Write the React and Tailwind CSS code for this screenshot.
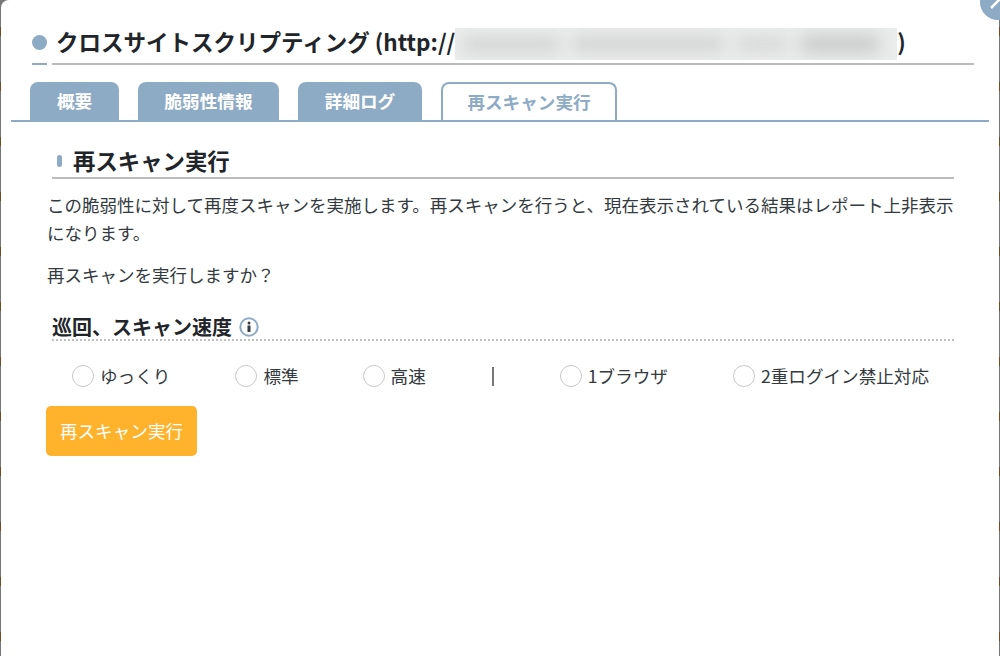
import React from 'react';

const tabs = [
    { label: '概要', width: 'w-[89px]' },
    { label: '脆弱性情報', width: 'w-[141px]' },
    { label: '詳細ログ', width: 'w-[124px]' },
];

const scanOptions = [
    { label: 'ゆっくり', margin: 'ml-[71px]' },
    { label: '標準', margin: 'ml-[65px]' },
    { label: '高速', margin: 'ml-[64px]' },
];

const browserOptions = [
    { label: '1ブラウザ', margin: 'ml-[66px]' },
    { label: '2重ログイン禁止対応', margin: 'ml-[65px]' },
];

const Radio = ({ label, margin }) => (
    <label className={`flex items-center gap-[6px] ${margin}`}>
        <span className="w-[22px] h-[22px] rounded-full border border-[#c8c8c8] bg-white shrink-0"></span>
        <span className="text-[17.6px] leading-[24px] text-[#333a40] whitespace-nowrap">{label}</span>
    </label>
);

const App = () => {
    return (
        <div className="relative w-[1000px] h-[656px] overflow-hidden flex px-px bg-[repeating-linear-gradient(180deg,#777777_0px,#777777_27px,#6e4d24_27px,#6e4d24_36px,#777777_36px,#777777_55px)] font-['Noto_Sans_CJK_JP',sans-serif] text-[#212529]">
            <div className="flex-1 flex flex-col bg-white rounded-tl-[8px]">
                {/* title */}
                <div className="flex items-end h-[65px] pl-[31px] pr-[25px]">
                    <div className="w-[15px] h-[36px] flex flex-col justify-between items-center mr-[5px]">
                        <span className="w-[15px] h-[15px] mt-[6px] rounded-full bg-[#8eabc5]"></span>
                        <span className="w-[15px] h-[2px] bg-[#8eabc5]"></span>
                    </div>
                    <h1 className="flex-1 flex items-start h-[37px] pl-[4px] border-b-2 border-[#bbbbbb] text-[22.5px] leading-[27px] font-bold whitespace-nowrap">
                        <span>クロスサイトスクリプティング (http://</span>
                        <span className="w-[442px] h-[32px] overflow-hidden bg-[#ebecec]">
                            <span className="flex items-center gap-[14px] h-full pl-[8px] -mr-[8px] blur-[8px]">
                                <span className="w-[96px] h-[13px] bg-[#cfd1d1]"></span>
                                <span className="w-[150px] h-[14px] bg-[#cfd1d1]"></span>
                                <span className="w-[50px] h-[12px] bg-[#d2d4d4]"></span>
                                <span className="w-[78px] h-[18px] bg-[#c9cbcb]"></span>
                            </span>
                        </span>
                        <span>)</span>
                    </h1>
                </div>

                {/* tabs */}
                <div className="flex items-end gap-[19px] h-[57px] mx-[10px] pl-[19px] border-b-2 border-[#8eabc5]">
                    {tabs.map((tab) => (
                        <div
                            key={tab.label}
                            className={`${tab.width} h-[38px] flex items-center justify-center rounded-t-[8px] bg-[#8eabc5] text-white text-[17.6px] font-bold`}
                        >
                            {tab.label}
                        </div>
                    ))}
                    <div className="w-[176px] h-[38px] flex items-center justify-center rounded-t-[8px] border-2 border-b-0 border-[#8eabc5] bg-white text-[#8eabc5] text-[17.6px] font-bold">
                        再スキャン実行
                    </div>
                </div>

                {/* body */}
                <div className="pl-[46px] pr-[45px]">
                    <div className="flex items-end h-[57px] ml-[5px] pb-[2px] border-b-2 border-[#bbbbbb]">
                        <span className="w-[5px] h-[12px] mb-[8px] ml-[5px] mr-[11px] rounded-full bg-[#8eabc5]"></span>
                        <h2 className="text-[22.4px] leading-[30px] font-bold">再スキャン実行</h2>
                    </div>
                    <p className="mt-[12px] -mr-[3px] text-[17.5px] leading-[28px] text-[#333a40]">
                        この脆弱性に対して再度スキャンを実施します。再スキャンを行うと、現在表示されている結果はレポート上非表示になります。
                    </p>
                    <p className="mt-[14px] text-[17.5px] leading-[28px] text-[#333a40]">再スキャンを実行しますか？</p>

                    <div className="flex items-center gap-[7px] h-[35px] pt-[9px] mt-[17px] ml-[5px] border-b-2 border-dotted border-[#c0c0c0]">
                        <h3 className="text-[20px] leading-[26px] font-bold">巡回、スキャン速度</h3>
                        <svg width="20" height="20" viewBox="0 0 20 20">
                            <circle cx="10" cy="10" r="8.7" fill="none" stroke="#8eabc5" strokeWidth="2" />
                            <circle cx="10" cy="6" r="1.5" fill="#333a40" />
                            <rect x="8.5" y="8.5" width="3" height="6.5" fill="#333a40" />
                        </svg>
                    </div>

                    <div className="flex items-center h-[24px] mt-[23px] -ml-[46px]">
                        {scanOptions.map((option) => (
                            <Radio key={option.label} {...option} />
                        ))}
                        <span className="w-[2px] h-[19px] ml-[66px] bg-[#777777]"></span>
                        {browserOptions.map((option) => (
                            <Radio key={option.label} {...option} />
                        ))}
                    </div>

                    <button className="block w-[151px] h-[50px] mt-[18px] -ml-px rounded-[5px] bg-[#ffb32c] text-white text-[17.6px]">
                        再スキャン実行
                    </button>
                </div>
            </div>

            {/* close button sits over the modal corner */}
            <div className="absolute top-[-16px] right-[-16px] w-[36px] h-[36px] rounded-full bg-[#8eabc5] overflow-hidden">
                <svg width="36" height="36" viewBox="0 0 36 36">
                    <path d="M 11 24 L 23 12" stroke="#ffffff" strokeWidth="2.5" fill="none" />
                </svg>
            </div>
        </div>
    );
};

export default App;
